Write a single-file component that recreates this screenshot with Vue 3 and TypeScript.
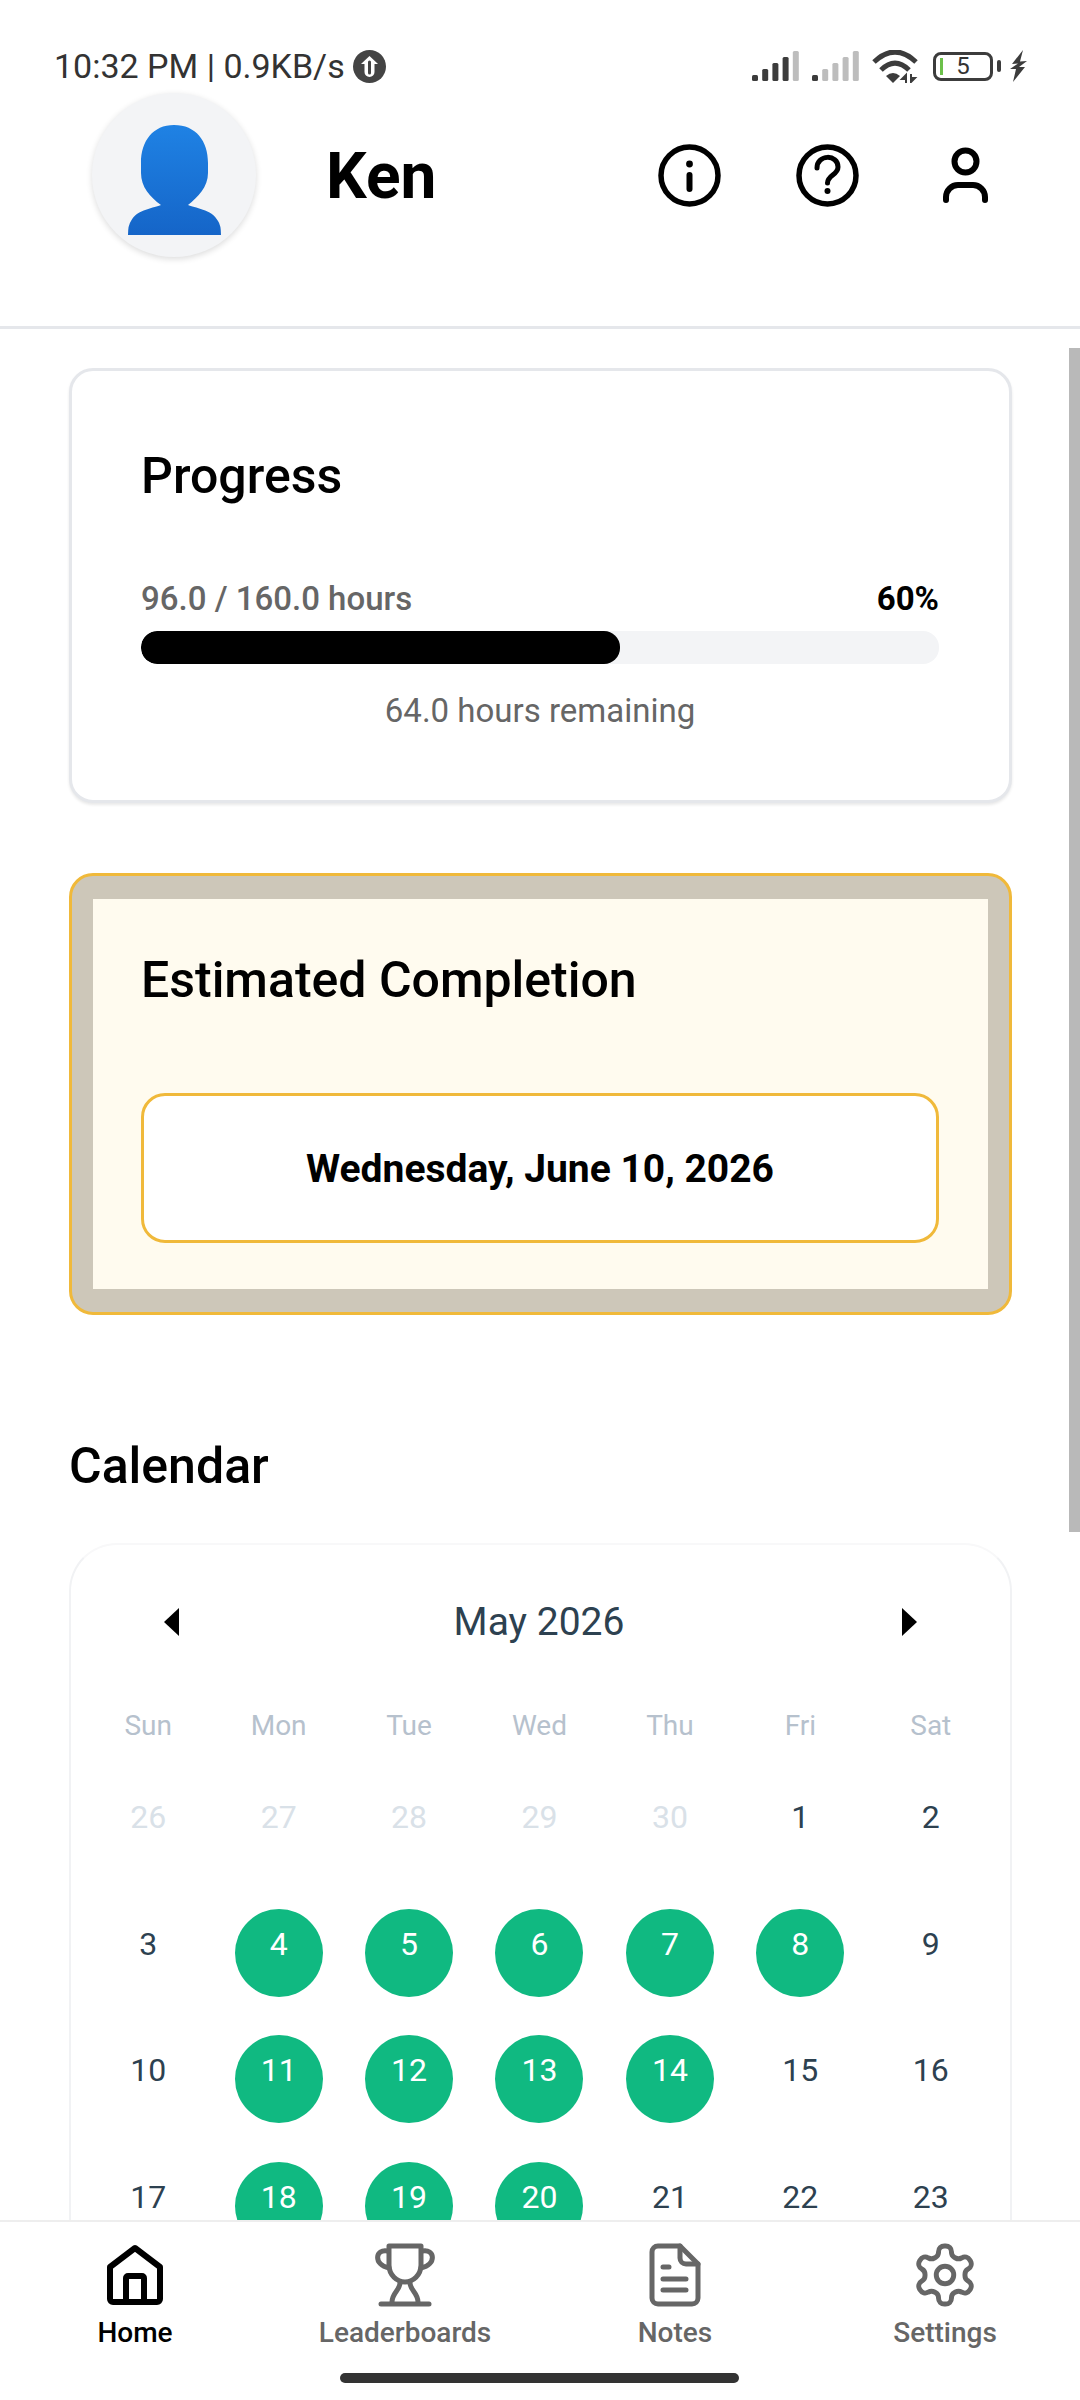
<template>
  <div class="screen">
    <div class="status-bar">
      <span class="status-text">10:32 PM | 0.9KB/s</span>
      <svg class="upload" width="33" height="33" viewBox="0 0 33 33">
        <circle cx="16.5" cy="16.5" r="16.5" fill="#444" />
        <path d="M16.5 6 L25 14 H21.5 V22 a5 5 0 0 1 -10 0 V14 H8 Z" fill="#fff" />
        <path d="M16.5 12 V23" stroke="#444" stroke-width="3" stroke-linecap="round" />
      </svg>
      <div class="status-right">
        <svg v-for="(active, n) in [4, 1]" :key="n" class="signal" width="47" height="30" viewBox="0 0 47 30">
          <rect
            v-for="b in 5"
            :key="b"
            :x="(b - 1) * 10.2"
            :y="24 - (b - 1) * 6"
            width="6"
            :height="6 + (b - 1) * 6"
            rx="1.5"
            :fill="b <= active ? '#3c3c3c' : '#bdbdbd'"
          />
        </svg>
        <svg class="wifi" width="46" height="33" viewBox="0 0 46 33">
          <g fill="none" stroke="#3c3c3c" stroke-width="5">
            <path d="M2 12 Q23 -8 44 12" />
            <path d="M9 20 Q23 6 37 20" />
          </g>
          <path d="M14 26 Q21 20 28 26 L21 33 Z" fill="#3c3c3c" />
          <path d="M34 33 V25 L30 29 H34 M39 24 V32 L43 28 H39" fill="#3c3c3c" stroke="#3c3c3c" stroke-width="2" />
        </svg>
        <div class="battery">
          <div class="battery-level"></div>
          <span class="battery-num">5</span>
          <div class="battery-nub"></div>
        </div>
        <svg class="bolt" width="17" height="32" viewBox="0 0 17 32">
          <path d="M13 0 L2 14 L8 13.5 L0 19 L6 19 L3 32 L15 17 L9 17 L17 11 L10 11.5 Z" fill="#3c3c3c" />
        </svg>
      </div>
    </div>

    <header class="header">
      <div class="avatar">
        <svg width="93" height="110" viewBox="0 0 93 110">
          <defs>
            <linearGradient id="person" x1="0" y1="0" x2="0" y2="1">
              <stop offset="0" stop-color="#1f82e4" />
              <stop offset="1" stop-color="#1565c8" />
            </linearGradient>
          </defs>
          <path
            d="M46 0 C68 0 80 16 80 38 V48 C80 62 70 72 60 80 C66 83 84 84 90 96 Q93 100 93 110 H0 Q0 100 3 96 C9 84 27 83 33 80 C22 72 13 62 13 48 V38 C13 16 25 0 46 0 Z"
            fill="url(#person)"
          />
        </svg>
      </div>
      <div class="name">Ken</div>
      <div class="header-icons">
        <svg width="63" height="63" viewBox="0 0 63 63" fill="none" stroke="#000" stroke-width="5.5" stroke-linecap="round">
          <circle cx="31.5" cy="31.5" r="28.5" />
          <path d="M31.5 31 V45" stroke-width="6" />
          <circle cx="31.5" cy="20" r="3.4" fill="#000" stroke="none" />
        </svg>
        <svg width="63" height="63" viewBox="0 0 63 63" fill="none" stroke="#000" stroke-width="5.5" stroke-linecap="round">
          <circle cx="31.5" cy="31.5" r="28.5" />
          <path d="M21 24 C21 10 42 10 42 23 C42 31 31.5 31 31.5 39" stroke-width="5" />
          <circle cx="31.5" cy="47" r="3" fill="#000" stroke="none" />
        </svg>
        <svg width="63" height="63" viewBox="0 0 63 63" fill="none" stroke="#000" stroke-width="6" stroke-linecap="round">
          <circle cx="31.5" cy="17.5" r="11" />
          <path d="M12 56 V53 A12 12 0 0 1 24 41 H39 A12 12 0 0 1 51 53 V56" />
        </svg>
      </div>
    </header>

    <main class="content">
      <div class="scrollbar"></div>

      <section class="card progress-card">
        <h2 class="card-title">Progress</h2>
        <div class="progress-row">
          <span class="hours">96.0 / 160.0 hours</span>
          <span class="percent">{{ percent }}%</span>
        </div>
        <div class="track">
          <div class="fill" :style="{ width: percent + '%' }"></div>
        </div>
        <div class="remaining">64.0 hours remaining</div>
      </section>

      <section class="estimate-card">
        <div class="estimate-inner">
          <h2 class="card-title">Estimated Completion</h2>
          <div class="date-box">Wednesday, June 10, 2026</div>
        </div>
      </section>

      <h2 class="calendar-title">Calendar</h2>
      <section class="calendar">
        <div class="month-row">
          <svg width="15" height="28" viewBox="0 0 15 28"><path d="M15 0 V28 L0 14 Z" fill="#000" /></svg>
          <span class="month">May 2026</span>
          <svg width="15" height="28" viewBox="0 0 15 28"><path d="M0 0 V28 L15 14 Z" fill="#000" /></svg>
        </div>
        <div class="week-row">
          <span v-for="w in weekdays" :key="w" class="weekday">{{ w }}</span>
        </div>
        <div class="days">
          <div v-for="(d, i) in days" :key="i" class="day-cell">
            <div class="day" :class="{ muted: d.muted, marked: d.marked }">{{ d.label }}</div>
          </div>
        </div>
      </section>
    </main>

    <nav class="nav">
      <div class="nav-item active">
        <svg width="64" height="64" viewBox="0 0 64 64" fill="none" stroke="#000" stroke-width="6" stroke-linejoin="round">
          <path d="M7 24 L32 5 L57 24 V56 a3 3 0 0 1 -3 3 H10 a3 3 0 0 1 -3 -3 Z" />
          <path d="M23 59 V35 a2 2 0 0 1 2 -2 H39 a2 2 0 0 1 2 2 V59" />
        </svg>
        <span>Home</span>
      </div>
      <div class="nav-item">
        <svg width="64" height="64" viewBox="0 0 64 64" fill="none" stroke="#666" stroke-width="5" stroke-linecap="round" stroke-linejoin="round">
          <path d="M16 3 H48 V22 C48 32 40 39 32 39 C24 39 16 32 16 22 Z" />
          <path d="M15 8 C2 5 0 22 16 25" />
          <path d="M49 8 C62 5 64 22 48 25" />
          <path d="M27 40 C27 47 19 50 19 59" />
          <path d="M37 40 C37 47 45 50 45 59" />
          <path d="M8 61 H56" />
        </svg>
        <span>Leaderboards</span>
      </div>
      <div class="nav-item">
        <svg width="64" height="64" viewBox="0 0 64 64" fill="none" stroke="#666" stroke-width="5" stroke-linecap="round" stroke-linejoin="round">
          <path d="M15 3 H37 L55 21 V55 a6 6 0 0 1 -6 6 H15 a6 6 0 0 1 -6 -6 V9 a6 6 0 0 1 6 -6 Z" />
          <path d="M37 3 V15 a6 6 0 0 0 6 6 H55" />
          <path d="M20 24 H26 M20 36 H43 M20 47 H43" />
        </svg>
        <span>Notes</span>
      </div>
      <div class="nav-item">
        <svg width="64" height="64" viewBox="1 1 22 22" fill="none" stroke="#666" stroke-width="1.7" stroke-linecap="round" stroke-linejoin="round">
          <path d="M12.22 2h-.44a2 2 0 0 0-2 2v.18a2 2 0 0 1-1 1.73l-.43.25a2 2 0 0 1-2 0l-.15-.08a2 2 0 0 0-2.73.73l-.22.38a2 2 0 0 0 .73 2.73l.15.1a2 2 0 0 1 1 1.72v.51a2 2 0 0 1-1 1.74l-.15.09a2 2 0 0 0-.73 2.73l.22.38a2 2 0 0 0 2.73.73l.15-.08a2 2 0 0 1 2 0l.43.25a2 2 0 0 1 1 1.73V20a2 2 0 0 0 2 2h.44a2 2 0 0 0 2-2v-.18a2 2 0 0 1 1-1.73l.43-.25a2 2 0 0 1 2 0l.15.08a2 2 0 0 0 2.73-.73l.22-.39a2 2 0 0 0-.73-2.73l-.15-.08a2 2 0 0 1-1-1.74v-.5a2 2 0 0 1 1-1.74l.15-.09a2 2 0 0 0 .73-2.73l-.22-.38a2 2 0 0 0-2.73-.73l-.15.08a2 2 0 0 1-2 0l-.43-.25a2 2 0 0 1-1-1.73V4a2 2 0 0 0-2-2z" />
          <circle cx="12" cy="12" r="3" />
        </svg>
        <span>Settings</span>
      </div>
      <div class="home-bar"></div>
    </nav>
  </div>
</template>

<script setup lang="ts">
interface Day {
  label: number
  muted: boolean
  marked: boolean
}

const percent = 60
const weekdays = ['Sun', 'Mon', 'Tue', 'Wed', 'Thu', 'Fri', 'Sat']
const markedDays = [4, 5, 6, 7, 8, 11, 12, 13, 14, 18, 19, 20]

const days: Day[] = []
for (let d = 26; d <= 30; d++) {
  days.push({ label: d, muted: true, marked: false })
}
for (let d = 1; d <= 23; d++) {
  days.push({ label: d, muted: false, marked: markedDays.includes(d) })
}
</script>

<style>
html,
body {
  margin: 0;
  background: #fff;
}
</style>

<style scoped>
.screen {
  width: 1080px;
  height: 2400px;
  display: flex;
  flex-direction: column;
  overflow: hidden;
  background: #fff;
  font-family: Roboto, "Liberation Sans", sans-serif;
}

.status-bar {
  height: 93px;
  flex-shrink: 0;
  box-sizing: border-box;
  padding: 50px 53px 10px 54px;
  display: flex;
  align-items: center;
  color: #333;
}

.status-text {
  font-size: 34px;
  line-height: 33px;
}

.upload {
  margin-left: 8px;
  margin-top: -1px;
}

.status-right {
  margin-left: auto;
  margin-top: -1px;
  display: flex;
  align-items: center;
}

.signal {
  margin-right: 13px;
}

.wifi {
  margin-right: 15px;
}

.battery {
  position: relative;
  width: 60px;
  height: 29px;
  box-sizing: border-box;
  border: 3.5px solid #3c3c3c;
  border-radius: 8px;
  display: flex;
  align-items: center;
  justify-content: center;
  margin-right: 17px;
}

.battery-level {
  position: absolute;
  left: 4px;
  top: 3px;
  bottom: 3px;
  width: 3px;
  background: #6cc04a;
}

.battery-num {
  font-size: 24px;
  line-height: 22px;
  color: #333;
}

.battery-nub {
  position: absolute;
  right: -11px;
  top: 5px;
  width: 4px;
  height: 12px;
  border-radius: 2px;
  background: #3c3c3c;
}

.header {
  height: 236px;
  flex-shrink: 0;
  box-sizing: border-box;
  display: flex;
  align-items: flex-start;
  padding: 0 83px 0 92px;
  border-bottom: 3px solid #e5e7eb;
}

.avatar {
  width: 164px;
  height: 164px;
  border-radius: 50%;
  background: #f3f4f6;
  box-shadow: 0 2px 6px rgba(0, 0, 0, 0.14);
  display: flex;
  align-items: center;
  justify-content: center;
}

.avatar svg {
  margin-top: 10px;
}

.name {
  margin-left: 70px;
  height: 164px;
  line-height: 168px;
  font-size: 64px;
  font-weight: 700;
  color: #000;
}

.header-icons {
  margin-left: auto;
  height: 164px;
  display: flex;
  align-items: center;
  gap: 75px;
}

.header-icons svg {
  margin-top: 1px;
}

.content {
  position: relative;
  flex: 1;
  min-height: 0;
  overflow: hidden;
  box-sizing: border-box;
  padding: 39px 68px 0 69px;
}

.scrollbar {
  position: absolute;
  right: 0;
  top: 19px;
  width: 11px;
  height: 1184px;
  background: #b9b9b9;
}

.card {
  box-sizing: border-box;
  height: 435px;
  padding: 75px 70px 0 69px;
  background: #fff;
  border: 3px solid #e5e7eb;
  border-radius: 24px;
  box-shadow: 0 2px 3px rgba(0, 0, 0, 0.09);
}

.card-title {
  margin: 0;
  font-size: 50px;
  line-height: 60px;
  font-weight: 500;
  color: #000;
}

.progress-row {
  margin-top: 73px;
  display: flex;
  justify-content: space-between;
  align-items: center;
  line-height: 40px;
  font-size: 33px;
  color: #666;
  font-weight: 500;
}

.percent {
  color: #000;
  font-weight: 700;
}

.track {
  margin-top: 12px;
  height: 33px;
  border-radius: 16px;
  background: #f3f4f6;
  overflow: hidden;
}

.fill {
  height: 100%;
  border-radius: 16px;
  background: #000;
}

.remaining {
  margin-top: 27px;
  text-align: center;
  font-size: 33px;
  line-height: 40px;
  color: #666;
}

.estimate-card {
  margin-top: 70px;
  height: 442px;
  box-sizing: border-box;
  padding: 23px 21px;
  background: #cdc7b9;
  border: 3px solid #f0b93a;
  border-radius: 24px;
}

.estimate-inner {
  height: 100%;
  box-sizing: border-box;
  padding: 51px 49px 0 48px;
  background: #fffbef;
}

.date-box {
  margin-top: 83px;
  height: 150px;
  box-sizing: border-box;
  padding-top: 2px;
  display: flex;
  align-items: center;
  justify-content: center;
  background: #fff;
  border: 3px solid #f0b93a;
  border-radius: 24px;
  font-size: 39px;
  font-weight: 700;
  color: #000;
}

.calendar-title {
  margin: 121px 0 0;
  font-size: 50px;
  line-height: 60px;
  font-weight: 500;
  color: #000;
}

.calendar {
  margin-top: 47px;
  box-sizing: border-box;
  width: 943px;
  padding: 0 14px 0 12px;
  background: #fff;
  border: 2px solid #f1f2f4;
  border-top-color: #f8f8f9;
  border-bottom: 0;
  border-radius: 48px 48px 0 0;
}

.month-row {
  height: 154px;
  box-sizing: border-box;
  padding: 0 79px 0 81px;
  display: flex;
  align-items: center;
  justify-content: space-between;
}

.month {
  font-size: 39px;
  margin-right: 3px;
  color: #2d4150;
}

.week-row {
  display: grid;
  grid-template-columns: repeat(7, 1fr);
  margin-top: 9px;
}

.weekday {
  text-align: center;
  font-size: 28px;
  line-height: 36px;
  color: #b6c1cd;
}

.days {
  margin-top: 38px;
  display: grid;
  grid-template-columns: repeat(7, 1fr);
  row-gap: 38.5px;
}

.day-cell {
  display: flex;
  justify-content: center;
}

.day {
  width: 88px;
  height: 88px;
  border-radius: 50%;
  text-align: center;
  line-height: 70px;
  font-size: 32px;
  color: #2d4150;
}

.day.muted {
  color: #d9e1e8;
}

.day.marked {
  background: #10b981;
  color: #fff;
}

.nav {
  position: relative;
  height: 180px;
  flex-shrink: 0;
  box-sizing: border-box;
  display: grid;
  grid-template-columns: repeat(4, 1fr);
  align-items: start;
  padding-top: 21px;
  background: #fff;
  border-top: 2px solid #eeeeee;
}

.nav-item {
  display: flex;
  flex-direction: column;
  align-items: center;
  font-size: 28px;
  font-weight: 500;
  line-height: 34px;
  color: #666;
}

.nav-item span {
  margin-top: 9px;
}

.nav-item.active {
  color: #000;
}

.home-bar {
  position: absolute;
  left: 340px;
  top: 151px;
  width: 399px;
  height: 10px;
  border-radius: 5px;
  background: #333;
}
</style>
